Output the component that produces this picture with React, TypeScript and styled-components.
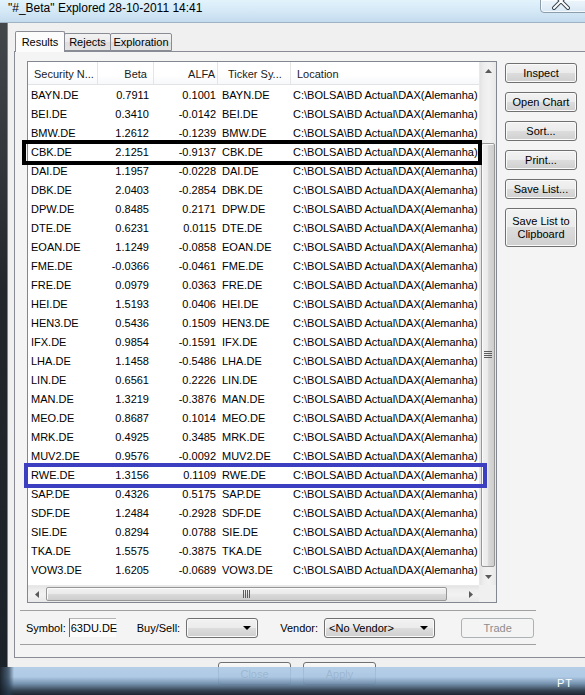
import React from "react";
import styled, { createGlobalStyle } from "styled-components";

const GlobalStyle = createGlobalStyle`
  html, body { margin: 0; padding: 0; }
  body {
    width: 585px;
    height: 695px;
    overflow: hidden;
    background: #f0f0f0;
    font-family: "Liberation Sans", Arial, sans-serif;
    font-size: 11px;
    color: #000;
  }
  * { box-sizing: border-box; }
`;

const Screen = styled.div`
  position: relative;
  width: 585px;
  height: 695px;
  overflow: hidden;
  display: flex;
  flex-direction: column;
`;

const TitleBar = styled.div`
  position: relative;
  flex: none;
  height: 23px;
  padding: 1px 0 0 8px;
  background: linear-gradient(#e2f3fc, #d3e7f5 55%, #c4dbee);
  border-bottom: 1px solid #9fb2c4;
  font-size: 12px;
  line-height: 14px;
  color: #000;
`;

const CloseButton = styled.div`
  position: absolute;
  top: -1px;
  left: 540px;
  width: 50px;
  height: 14px;
  border: 1px solid #8d9cab;
  border-radius: 0 0 0 4px;
  background: linear-gradient(#edf5fb, #d9e8f4);
  box-shadow: inset 0 0 0 1px rgba(255, 255, 255, 0.7);
  overflow: hidden;
`;

const Body = styled.div`
  flex: 1;
  display: flex;
  min-height: 0;
`;

const DesktopStrip = styled.div`
  flex: none;
  width: 7px;
  background: linear-gradient(#43474c, #23272b 40%, #1a2229);
`;

const Client = styled.div`
  flex: 1;
  display: flex;
  flex-direction: column;
  min-width: 0;
  padding: 8px 0 0 6px;
  background: #f0f0f0;
  border-left: 1px solid #7b838c;
`;

const TabStrip = styled.div`
  position: relative;
  z-index: 1;
  display: flex;
  align-items: flex-end;
  height: 21px;
  margin: 0 0 -1px 1px;
`;

const Tab = styled.div<{ $active?: boolean; $w: number }>`
  width: ${(p) => p.$w}px;
  height: ${(p) => (p.$active ? 21 : 18)}px;
  margin-bottom: ${(p) => (p.$active ? 0 : 1)}px;
  margin-left: ${(p) => (p.$active ? 0 : -1)}px;
  display: flex;
  align-items: center;
  justify-content: center;
  padding-bottom: ${(p) => (p.$active ? 1 : 0)}px;
  border: 1px solid #898c95;
  border-bottom: ${(p) => (p.$active ? "none" : "1px solid #898c95")};
  border-radius: 2px 2px 0 0;
  background: ${(p) =>
    p.$active ? "#fcfcfc" : "linear-gradient(#f3f3f3, #ebebeb 50%, #dedede 50%, #e3e3e3)"};
  font-size: 11px;
  color: #000;
`;

const TabPanel = styled.div`
  display: flex;
  flex-direction: column;
  padding: 9px 0 0 5px;
  background: #f4f4f4;
  border: 1px solid #898c95;
  border-right: none;
`;

const MainRow = styled.div`
  position: relative;
  display: flex;
  gap: 8px;
  margin-left: 7px;
`;

const ListFrame = styled.div`
  flex: none;
  width: 470px;
  height: 542px;
  border: 1px solid #828790;
  background: #fff;
  display: grid;
  grid-template-columns: 451px 17px;
  grid-template-rows: 523px 17px;
`;

const Viewport = styled.div`
  overflow: hidden;
`;

const HeaderRow = styled.div`
  display: flex;
  height: 23px;
  background: linear-gradient(#ffffff, #ffffff 60%, #f7f8fa);
  border-bottom: 1px solid #e2e3e5;
`;

const Row = styled.div`
  display: flex;
  height: 19px;
  align-items: center;
`;

type Align = "left" | "right";

const HeadCell = styled.div<{ $w: number; $align: Align; $pad: number }>`
  flex: none;
  width: ${(p) => p.$w}px;
  display: flex;
  align-items: center;
  justify-content: ${(p) => (p.$align === "left" ? "flex-start" : "flex-end")};
  padding-${(p) => p.$align}: ${(p) => p.$pad}px;
  padding-top: 2px;
  border-right: 1px solid #e5e5e5;
  color: #1b1b1b;
  white-space: nowrap;
  overflow: hidden;
`;

const Cell = styled.div<{ $w: number; $align: Align; $pad: number }>`
  flex: none;
  width: ${(p) => p.$w}px;
  text-align: ${(p) => p.$align};
  padding-${(p) => p.$align}: ${(p) => p.$pad}px;
  white-space: nowrap;
  overflow: hidden;
`;

const VScroll = styled.div`
  display: flex;
  flex-direction: column;
  background: linear-gradient(to right, #e4e4e4, #eeeeee 25%, #f2f2f2 55%, #e8e8e8);
  border-left: 1px solid #e9e9e9;
`;

const HScroll = styled.div`
  display: flex;
  background: linear-gradient(#e4e4e4, #eeeeee 25%, #f2f2f2 55%, #e8e8e8);
  border-top: 1px solid #e9e9e9;
`;

const ScrollCorner = styled.div`
  background: #f0f0f0;
`;

const ArrowBox = styled.div`
  flex: none;
  width: 17px;
  height: 17px;
  display: flex;
  align-items: center;
  justify-content: center;
`;

const TrackGap = styled.div<{ $size: number }>`
  flex: none;
  width: ${(p) => p.$size}px;
  height: ${(p) => p.$size}px;
`;

const VTrackGap = styled(TrackGap)`
  width: 100%;
`;

const HTrackGap = styled(TrackGap)`
  height: 100%;
`;

const VThumb = styled.div<{ $size: number }>`
  flex: none;
  height: ${(p) => p.$size}px;
  margin: 0 1px 0 1px;
  border: 1px solid #979797;
  border-radius: 2px;
  background: linear-gradient(to right, #f1f1f1, #ebebeb 45%, #d9d9d9 55%, #cdcdcd);
  box-shadow: inset 1px 1px 0 #fbfbfb;
  display: flex;
  align-items: center;
  justify-content: center;
`;

const HThumb = styled.div<{ $size: number }>`
  flex: none;
  width: ${(p) => p.$size}px;
  margin: 1px 0 1px 0;
  border: 1px solid #979797;
  border-radius: 2px;
  background: linear-gradient(#f1f1f1, #ebebeb 45%, #d9d9d9 55%, #cdcdcd);
  box-shadow: inset 1px 1px 0 #fbfbfb;
  display: flex;
  align-items: center;
  justify-content: center;
`;

const SideButtons = styled.div`
  flex: none;
  width: 72px;
  margin-top: 2px;
  display: flex;
  flex-direction: column;
  gap: 9px;
`;

const WinButton = styled.div<{ $h?: number }>`
  height: ${(p) => p.$h ?? 20}px;
  display: flex;
  align-items: center;
  justify-content: center;
  text-align: center;
  line-height: 13px;
  border: 1px solid #707070;
  border-radius: 3px;
  background: linear-gradient(#f2f2f2, #ebebeb 50%, #dddddd 50%, #cfcfcf);
  box-shadow: inset 0 0 0 1px #fafafa;
  color: #000;
  font-size: 11px;
`;

const Highlight = styled.div<{ $color: string; $top: number; $left: number; $width: number }>`
  position: absolute;
  top: ${(p) => p.$top}px;
  left: ${(p) => p.$left}px;
  width: ${(p) => p.$width}px;
  height: 25px;
  border: 4px solid ${(p) => p.$color};
  pointer-events: none;
`;

const OrderSection = styled.div`
  margin-top: 7px;
  margin-bottom: 12px;
  width: 516px;
  height: 35px;
  display: flex;
  align-items: center;
  padding-left: 6px;
  border-top: 1px solid #a0a0a0;
  border-bottom: 1px solid #a0a0a0;
`;

const Label = styled.span<{ $ml?: number }>`
  margin-left: ${(p) => p.$ml ?? 0}px;
  white-space: nowrap;
`;

const SymbolInput = styled.div`
  margin-left: 3px;
  width: 47px;
  height: 19px;
  display: flex;
  align-items: center;
  padding-left: 1px;
  border-left: 1px solid #6a6a6a;
  border-top: 1px solid #b5b5b5;
  background: #fbfbfb;
  font-size: 11px;
`;

const Combo = styled.div<{ $w: number }>`
  margin-left: 6px;
  width: ${(p) => p.$w}px;
  height: 20px;
  display: flex;
  align-items: center;
  justify-content: space-between;
  padding: 0 6px 0 4px;
  border: 1px solid #707070;
  border-radius: 3px;
  background: linear-gradient(#f2f2f2, #ebebeb 50%, #dddddd 50%, #cfcfcf);
  box-shadow: inset 0 0 0 1px #fafafa;
`;

const TradeButton = styled.div`
  margin-left: 26px;
  width: 73px;
  height: 20px;
  display: flex;
  align-items: center;
  justify-content: center;
  border: 1px solid #adb2b5;
  border-radius: 3px;
  background: #f4f4f4;
  color: #8d8d8d;
`;

const DialogButtons = styled.div`
  display: flex;
  gap: 12px;
  padding: 4px 0 0 204px;
`;

const DialogButton = styled.div`
  width: 73px;
  height: 23px;
  display: flex;
  align-items: center;
  justify-content: center;
  border: 1px solid #707070;
  border-radius: 3px;
  background: linear-gradient(#f8f8f8, #ececec 50%, #dddddd 50%, #cfcfcf);
  color: #333;
`;

const Taskbar = styled.div`
  position: absolute;
  left: 0;
  right: 0;
  bottom: 0;
  height: 28px;
  display: flex;
  align-items: flex-end;
  justify-content: flex-end;
  padding: 0 12px 6px 0;
  background:
    linear-gradient(to right, rgba(22, 30, 38, 0.95) 0px, rgba(40, 60, 80, 0.7) 9px, rgba(0, 0, 0, 0) 14px),
    linear-gradient(rgba(170, 200, 230, 0.86), rgba(168, 198, 228, 0.9) 35%, rgba(110, 140, 170, 0.95) 60%, #33414f 85%, #1c2631);
  color: #fff;
  font-size: 11px;
  letter-spacing: 1px;
`;

const TitleText = styled.span`
  white-space: nowrap;
`;

const rows: [string, string, string][] = [
  ["BAYN.DE", "0.7911", "0.1001"],
  ["BEI.DE", "0.3410", "-0.0142"],
  ["BMW.DE", "1.2612", "-0.1239"],
  ["CBK.DE", "2.1251", "-0.9137"],
  ["DAI.DE", "1.1957", "-0.0228"],
  ["DBK.DE", "2.0403", "-0.2854"],
  ["DPW.DE", "0.8485", "0.2171"],
  ["DTE.DE", "0.6231", "0.0115"],
  ["EOAN.DE", "1.1249", "-0.0858"],
  ["FME.DE", "-0.0366", "-0.0461"],
  ["FRE.DE", "0.0979", "0.0363"],
  ["HEI.DE", "1.5193", "0.0406"],
  ["HEN3.DE", "0.5436", "0.1509"],
  ["IFX.DE", "0.9854", "-0.1591"],
  ["LHA.DE", "1.1458", "-0.5486"],
  ["LIN.DE", "0.6561", "0.2226"],
  ["MAN.DE", "1.3219", "-0.3876"],
  ["MEO.DE", "0.8687", "0.1014"],
  ["MRK.DE", "0.4925", "0.3485"],
  ["MUV2.DE", "0.9576", "-0.0092"],
  ["RWE.DE", "1.3156", "0.1109"],
  ["SAP.DE", "0.4326", "0.5175"],
  ["SDF.DE", "1.2484", "-0.2928"],
  ["SIE.DE", "0.8294", "0.0788"],
  ["TKA.DE", "1.5575", "-0.3875"],
  ["VOW3.DE", "1.6205", "-0.0689"],
];

const columns: { title: string; w: number; align: Align; hp: number; cp: number }[] = [
  { title: "Security N...", w: 70, align: "left", hp: 6, cp: 3 },
  { title: "Beta", w: 56, align: "right", hp: 6, cp: 5 },
  { title: "ALFA", w: 64, align: "right", hp: 2, cp: 2 },
  { title: "Ticker Sy...", w: 73, align: "left", hp: 10, cp: 4 },
  { title: "Location", w: 200, align: "left", hp: 6, cp: 2 },
];

const LOCATION = "C:\\BOLSA\\BD Actual\\DAX(Alemanha)";

const Tri = ({ dir }: { dir: "up" | "down" | "left" | "right" }) => {
  const pts = {
    up: "0,4 7,4 3.5,0",
    down: "0,0 7,0 3.5,4",
    left: "4,0 4,7 0,3.5",
    right: "0,0 0,7 4,3.5",
  }[dir];
  const vertical = dir === "up" || dir === "down";
  return (
    <svg width={vertical ? 7 : 4} height={vertical ? 4 : 7} viewBox={vertical ? "0 0 7 4" : "0 0 4 7"}>
      <polygon points={pts} fill="#5a5a5a" />
    </svg>
  );
};

const GripV = () => (
  <svg width="8" height="8" viewBox="0 0 8 8">
    {[0.5, 2.5, 4.5, 6.5].map((y) => (
      <line key={y} x1="0" x2="8" y1={y} y2={y} stroke="#5c5c5c" strokeWidth="1" />
    ))}
  </svg>
);

const GripH = () => (
  <svg width="8" height="8" viewBox="0 0 8 8">
    {[0.5, 2.5, 4.5, 6.5].map((x) => (
      <line key={x} y1="0" y2="8" x1={x} x2={x} stroke="#5c5c5c" strokeWidth="1" />
    ))}
  </svg>
);

const ComboArrow = () => (
  <svg width="8" height="4" viewBox="0 0 8 4">
    <polygon points="0,0 8,0 4,4" fill="#000" />
  </svg>
);

export default function App() {
  return (
    <>
      <GlobalStyle />
      <Screen>
        <TitleBar>
          <TitleText>"#_Beta" Explored 28-10-2011 14:41</TitleText>
          <CloseButton>
            <svg width="50" height="14" viewBox="0 0 50 14">
              <path d="M13 -6 L27 8 M27 -6 L13 8" stroke="#3c4650" strokeWidth="4" strokeLinecap="round" />
              <path d="M13 -6 L27 8 M27 -6 L13 8" stroke="#ffffff" strokeWidth="2" strokeLinecap="round" />
            </svg>
          </CloseButton>
        </TitleBar>
        <Body>
          <DesktopStrip />
          <Client>
            <TabStrip>
              <Tab $active $w={50}>Results</Tab>
              <Tab $w={47}>Rejects</Tab>
              <Tab $w={62}>Exploration</Tab>
            </TabStrip>
            <TabPanel>
              <MainRow>
                <ListFrame>
                  <Viewport>
                    <HeaderRow>
                      {columns.map((c) => (
                        <HeadCell key={c.title} $w={c.w} $align={c.align} $pad={c.hp}>
                          {c.title}
                        </HeadCell>
                      ))}
                    </HeaderRow>
                    {rows.map(([sym, beta, alfa]) => {
                      const values = [sym, beta, alfa, sym, LOCATION];
                      return (
                        <Row key={sym}>
                          {columns.map((c, i) => (
                            <Cell key={c.title} $w={c.w} $align={c.align} $pad={c.cp}>
                              {values[i]}
                            </Cell>
                          ))}
                        </Row>
                      );
                    })}
                  </Viewport>
                  <VScroll>
                    <ArrowBox>
                      <Tri dir="up" />
                    </ArrowBox>
                    <VTrackGap $size={64} />
                    <VThumb $size={424}>
                      <GripV />
                    </VThumb>
                    <VTrackGap $size={1} />
                    <ArrowBox>
                      <Tri dir="down" />
                    </ArrowBox>
                  </VScroll>
                  <HScroll>
                    <ArrowBox>
                      <Tri dir="left" />
                    </ArrowBox>
                    <HTrackGap $size={1} />
                    <HThumb $size={401}>
                      <GripH />
                    </HThumb>
                    <HTrackGap $size={15} />
                    <ArrowBox>
                      <Tri dir="right" />
                    </ArrowBox>
                  </HScroll>
                  <ScrollCorner />
                </ListFrame>
                <SideButtons>
                  <WinButton>Inspect</WinButton>
                  <WinButton>Open Chart</WinButton>
                  <WinButton>Sort...</WinButton>
                  <WinButton>Print...</WinButton>
                  <WinButton>Save List...</WinButton>
                  <WinButton $h={39}>
                    Save List to
                    <br />
                    Clipboard
                  </WinButton>
                </SideButtons>
                <Highlight $color="#000000" $top={79} $left={-5} $width={460} />
                <Highlight $color="#3b3fc0" $top={402} $left={-3} $width={463} />
              </MainRow>
              <OrderSection>
                <Label>Symbol:</Label>
                <SymbolInput>63DU.DE</SymbolInput>
                <Label $ml={21}>Buy/Sell:</Label>
                <Combo $w={72}>
                  <span />
                  <ComboArrow />
                </Combo>
                <Label $ml={22}>Vendor:</Label>
                <Combo $w={111}>
                  <span>&lt;No Vendor&gt;</span>
                  <ComboArrow />
                </Combo>
                <TradeButton>Trade</TradeButton>
              </OrderSection>
            </TabPanel>
            <DialogButtons>
              <DialogButton>Close</DialogButton>
              <DialogButton>Apply</DialogButton>
            </DialogButtons>
          </Client>
        </Body>
        <Taskbar>PT</Taskbar>
      </Screen>
    </>
  );
}
